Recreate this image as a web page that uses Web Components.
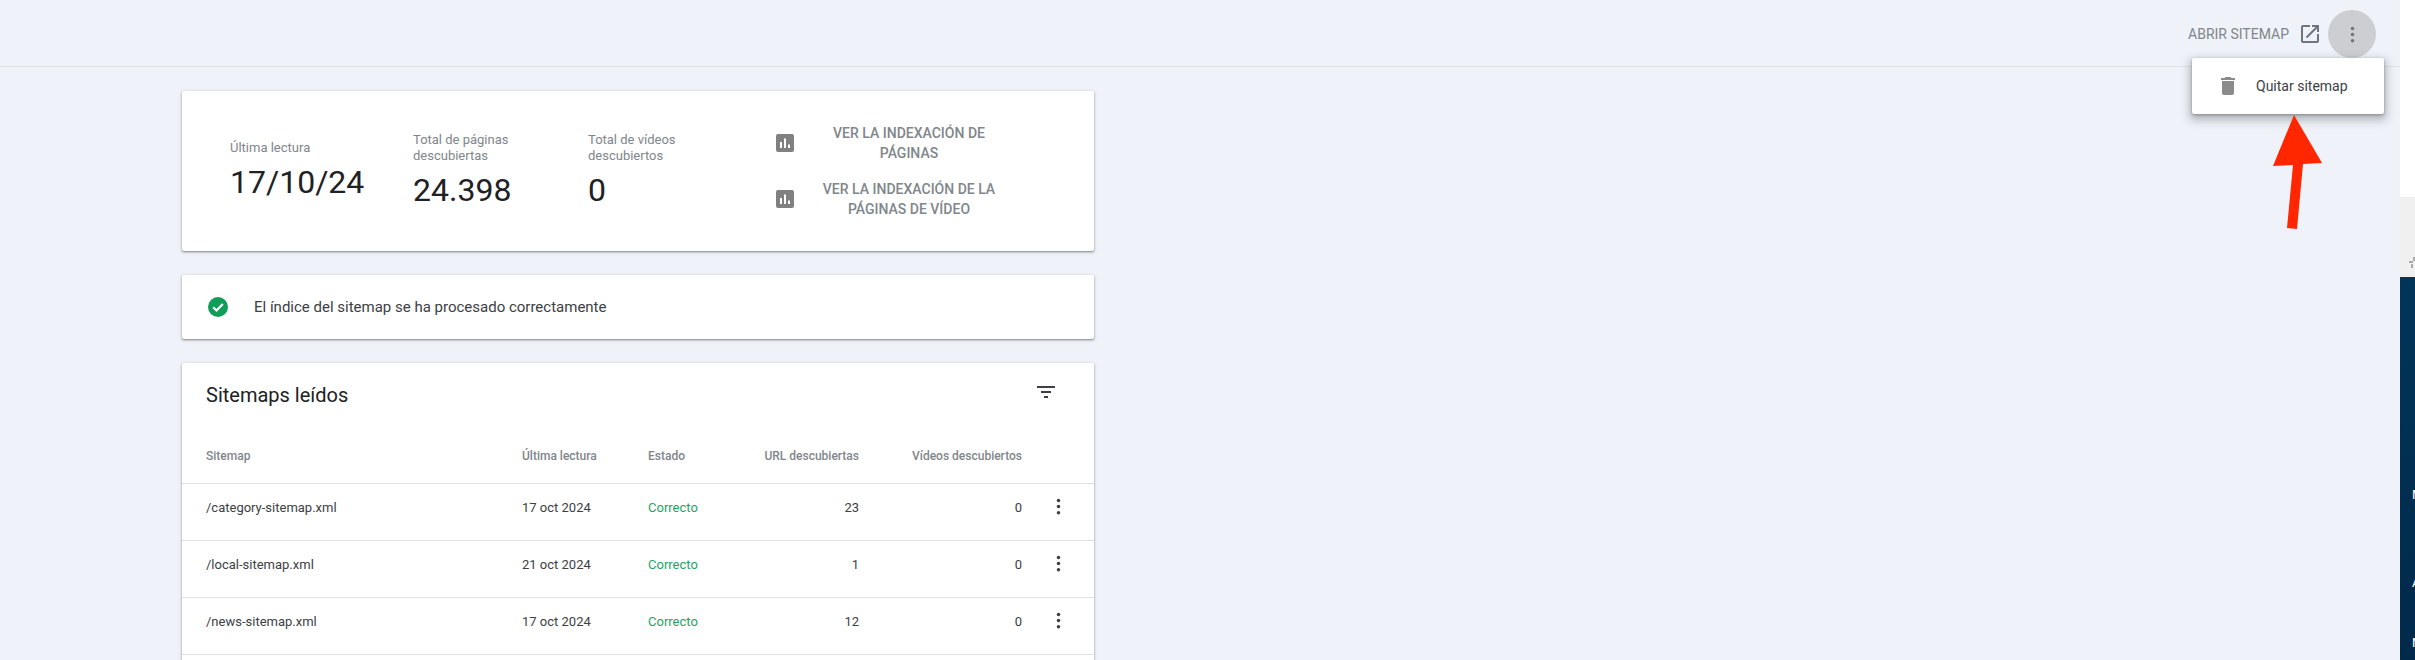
<!DOCTYPE html>
<html lang="es"><head><meta charset="utf-8"><title>Sitemap</title>
<style>
html,body{margin:0;height:660px;overflow:hidden;background:#eff2f8;font-family:Roboto,"Liberation Sans",sans-serif;color:#202124}
</style></head><body>
<app-shell>
  <top-bar slot="top"></top-bar>
  <stat-card>
    <stat-item label="Última lectura" value="17/10/24" style="width:183px"></stat-item>
    <stat-item label="Total de páginas descubiertas" value="24.398" style="width:175px"></stat-item>
    <stat-item label="Total de vídeos descubiertos" value="0" style="width:188px"></stat-item>
    <div style="display:flex;flex-direction:column;gap:16px">
      <link-button>VER LA INDEXACIÓN DE PÁGINAS</link-button>
      <link-button>VER LA INDEXACIÓN DE LA PÁGINAS DE VÍDEO</link-button>
    </div>
  </stat-card>
  <status-card>El índice del sitemap se ha procesado correctamente</status-card>
  <sitemap-table>
    <sitemap-row name="/category-sitemap.xml" date="17 oct 2024" urls="23" videos="0"></sitemap-row>
    <sitemap-row name="/local-sitemap.xml" date="21 oct 2024" urls="1" videos="0"></sitemap-row>
    <sitemap-row name="/news-sitemap.xml" date="17 oct 2024" urls="12" videos="0"></sitemap-row>
    <sitemap-row></sitemap-row>
  </sitemap-table>
  <popup-menu slot="overlay">Quitar sitemap</popup-menu>
  <red-arrow slot="overlay"></red-arrow>
  <side-strip slot="side"></side-strip>
</app-shell>
<script>
const KEBAB='<svg viewBox="0 0 24 24" width="21" height="21" fill="currentColor"><circle cx="12" cy="5" r="2"/><circle cx="12" cy="12" r="2"/><circle cx="12" cy="19" r="2"/></svg>';
function def(name,css,html){
  customElements.define(name,class extends HTMLElement{
    connectedCallback(){
      if(this.shadowRoot)return;
      const r=this.attachShadow({mode:'open'});
      r.innerHTML='<style>'+css+'</style>'+(typeof html==='function'?html(this):html);
    }
  });
}
def('app-shell',`
:host{display:flex;width:2415px;height:660px;overflow:hidden;position:relative}
.main{width:2400px;flex:none;height:660px;overflow:hidden}
.content{padding:24px 0 0 182px;width:912px;display:flex;flex-direction:column;gap:24px}
`,`<div class="main"><slot name="top"></slot><div class="content"><slot></slot></div></div>
<slot name="side"></slot><slot name="overlay"></slot>`);
def('top-bar',`
:host{display:flex;align-items:flex-start;justify-content:flex-end;height:67px;box-sizing:border-box;border-bottom:1px solid #e1e3e3;padding:10px 24px 0 0}
.open{display:flex;align-items:center;height:48px;font-size:14px;color:#80868b;gap:9px;margin-right:6px}
.kebab{width:48px;height:48px;border-radius:50%;background:#cdced2;color:#70757a;display:flex;align-items:center;justify-content:center}
`,`<div class="open">ABRIR SITEMAP<svg viewBox="0 0 24 24" width="24" height="24" fill="#70757a"><path d="M19 19H5V5h7V3H5a2 2 0 0 0-2 2v14a2 2 0 0 0 2 2h14a2 2 0 0 0 2-2v-7h-2v7zM14 3v2h3.59l-9.83 9.83 1.41 1.41L19 6.41V10h2V3h-7z"/></svg></div><div class="kebab">${KEBAB}</div>`);
const CARD='background:#fff;border-radius:2px;box-shadow:0 1px 2px rgba(60,64,67,.55),0 1px 3px 1px rgba(60,64,67,.1);';
def('stat-card',`
:host{display:flex;align-items:center;height:160px;padding-left:48px;box-sizing:border-box;${CARD}}
`,`<slot></slot>`);
def('stat-item',`
:host{display:block;box-sizing:border-box;padding-right:20px}
.l{font-size:13px;line-height:16px;color:#80868b;width:130px}
.v{font-size:32px;line-height:40px;margin-top:6px;color:#202124}
`,h=>`<div class="l">${h.getAttribute('label')}</div><div class="v">${h.getAttribute('value')}</div>`);
def('link-button',`
:host{display:flex;align-items:center;width:270px;height:40px}
svg{flex:none}
.t{flex:none;width:180px;margin-left:25px;text-align:center;font-size:14px;font-weight:500;line-height:20px;color:#80868b}
`,`<svg viewBox="0 0 18 18" width="18" height="18"><rect width="18" height="18" rx="2" fill="#808080"/><path fill="#fff" d="M4 8h2v6H4zM8 4.5h2V14H8zM12 10.5h2V14h-2z"/></svg><div class="t"><slot></slot></div>`);
def('status-card',`
:host{display:flex;align-items:center;height:64px;padding-left:26px;box-sizing:border-box;font-size:15px;color:#3c4043;${CARD}}
svg{margin-right:26px;flex:none}
`,`<svg viewBox="0 0 20 20" width="20" height="20"><circle cx="10" cy="10" r="10" fill="#0f9d58"/><path d="M5.2 10.3l3.3 3.2 6.3-6.5" fill="none" stroke="#fff" stroke-width="2.2"/></svg><slot></slot>`);
const COLS='grid-template-columns:316px 126px 100px 111px 163px 72px;padding-left:24px;';
def('sitemap-table',`
:host{display:block;height:400px;${CARD}}
.top{display:flex;justify-content:space-between;height:65px;padding:0 36px 0 24px}
.title{font-size:20px;line-height:64px;color:#202124}
svg{margin-top:17px;display:block}
.head{display:grid;${COLS}height:55px;align-items:center;font-size:12px;font-weight:500;color:#80868b;border-bottom:1px solid #e0e0e0;white-space:nowrap}
.r{text-align:right}
`,`<div class="top"><div class="title">Sitemaps leídos</div><svg viewBox="0 0 24 24" width="24" height="24" fill="#3c4043"><path d="M3 6h18v2H3zM7 11h10v2H7zM10 16h4v2h-4z"/></svg></div>
<div class="head"><div>Sitemap</div><div>Última lectura</div><div>Estado</div><div class="r">URL descubiertas</div><div class="r">Vídeos descubiertos</div><div></div></div><slot></slot>`);
def('sitemap-row',`
:host{display:grid;${COLS}height:56px;border-bottom:1px solid #e0e0e0;font-size:13px;color:#3c4043;align-items:start}
div{line-height:16px;padding-top:16px}
.ok{color:#1ea362}
.r{text-align:right;color:#3c4043}
.k{padding:12px 0 0;display:flex;justify-content:center;color:#3c4043}
`,h=>h.hasAttribute('name')?`<div>${h.getAttribute('name')}</div><div>${h.getAttribute('date')}</div><div class="ok">Correcto</div><div class="r">${h.getAttribute('urls')}</div><div class="r">${h.getAttribute('videos')}</div><div class="k">${KEBAB}</div>`:'');
def('popup-menu',`
:host{position:absolute;left:2192px;top:58px;width:192px;height:56px;display:flex;align-items:center;box-sizing:border-box;padding-left:24px;background:#fff;border-radius:2px;font-size:14px;color:#3c4043;box-shadow:0 4px 10px 2px rgba(60,64,67,.35),0 1px 3px rgba(60,64,67,.4)}
svg{margin-right:16px;flex:none}
`,`<svg viewBox="0 0 24 24" width="24" height="24" fill="#8a8a8a"><path d="M6 19c0 1.1.9 2 2 2h8c1.1 0 2-.9 2-2V7H6v12zM19 4h-3.5l-1-1h-5l-1 1H5v2h14V4z"/></svg><slot></slot>`);
def('red-arrow',`:host{position:absolute;left:2270px;top:112px;display:block;width:56px;height:120px}`,
`<svg viewBox="0 0 56 120" width="56" height="120"><polygon fill="#ff2600" points="24,3 3,54 23,53 17,116 27,117 33,52 52,51"/></svg>`);
def('side-strip',`
:host{display:flex;flex-direction:column;width:15px;height:660px;overflow:hidden;font-size:13px;flex:none}
.w{height:197px;background:#fff;flex:none}
.g{height:80px;background:#f0f0f0;position:relative;flex:none}
.g svg{position:absolute;left:9px;top:60px}
.d{flex:1;min-height:0;background:linear-gradient(#003559,#01294a);color:#fff;padding:210px 0 0 12px;line-height:16px;overflow:hidden}
.d div{height:16px;white-space:nowrap}
.a{margin-top:72px}.b{margin-top:44px}
`,`<div class="w"></div><div class="g"><svg viewBox="0 0 12 12" width="12" height="12" fill="#aaa"><rect x="0" y="4" width="4" height="2"/><rect x="4" y="0" width="2" height="4"/><rect x="6" y="6" width="4" height="2"/><rect x="2" y="7" width="2" height="4"/></svg></div><div class="d"><div>M</div><div class="a">A</div><div class="b">M</div></div>`);
</script>
</body></html>
